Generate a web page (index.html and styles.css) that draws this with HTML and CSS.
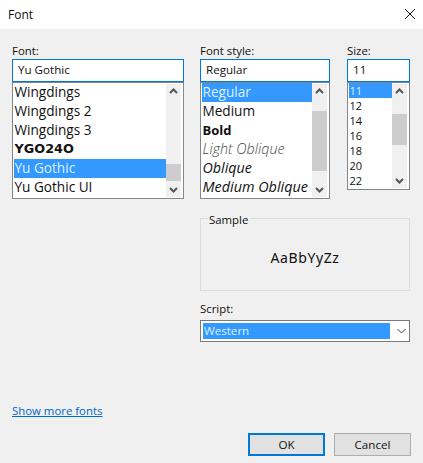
FILE: index.html
```html
<!DOCTYPE html>
<html lang="en">
<head>
<meta charset="utf-8">
<title>Font</title>
<link rel="stylesheet" href="styles.css">
</head>
<body>
<div class="dialog">
  <header class="titlebar">
    <span class="title">Font</span>
    <svg class="close" width="12" height="12" viewBox="0 0 12 12"><path d="M1 1l10 10M11 1L1 11" stroke="#111" stroke-width="1" fill="none"/></svg>
  </header>
  <main class="content">
    <div class="pickers">
      <section class="picker picker-font">
        <label class="label">Font:</label>
        <div class="input">Yu Gothic</div>
        <div class="list list-tall">
          <ul class="items">
            <li>Wingdings</li>
            <li>Wingdings 2</li>
            <li>Wingdings 3</li>
            <li class="ygo">YGO24O</li>
            <li class="sel">Yu Gothic</li>
            <li>Yu Gothic UI</li>
          </ul>
          <div class="scroll">
            <svg class="arrow" width="15" height="15" viewBox="0 0 15 15"><path d="M4 9l3.5-3.5L11 9" stroke="#555" stroke-width="2" fill="none"/></svg>
            <div class="track"><div class="thumb thumb-font"></div></div>
            <svg class="arrow" width="15" height="15" viewBox="0 0 15 15"><path d="M4 6l3.5 3.5L11 6" stroke="#555" stroke-width="2" fill="none"/></svg>
          </div>
        </div>
      </section>
      <section class="picker picker-style">
        <label class="label">Font style:</label>
        <div class="input">Regular</div>
        <div class="list list-tall">
          <ul class="items">
            <li class="sel">Regular</li>
            <li>Medium</li>
            <li class="bold">Bold</li>
            <li class="light">Light Oblique</li>
            <li class="oblique">Oblique</li>
            <li class="oblique medium">Medium Oblique</li>
          </ul>
          <div class="scroll">
            <svg class="arrow" width="15" height="15" viewBox="0 0 15 15"><path d="M4 9l3.5-3.5L11 9" stroke="#555" stroke-width="2" fill="none"/></svg>
            <div class="track"><div class="thumb thumb-style"></div></div>
            <svg class="arrow" width="15" height="15" viewBox="0 0 15 15"><path d="M4 6l3.5 3.5L11 6" stroke="#555" stroke-width="2" fill="none"/></svg>
          </div>
        </div>
      </section>
      <section class="picker picker-size">
        <label class="label">Size:</label>
        <div class="input">11</div>
        <div class="list list-short">
          <ul class="items compact">
            <li class="sel">11</li>
            <li>12</li>
            <li>14</li>
            <li>16</li>
            <li>18</li>
            <li>20</li>
            <li>22</li>
          </ul>
          <div class="scroll">
            <svg class="arrow" width="15" height="15" viewBox="0 0 15 15"><path d="M4 9l3.5-3.5L11 9" stroke="#555" stroke-width="2" fill="none"/></svg>
            <div class="track"><div class="thumb thumb-size"></div></div>
            <svg class="arrow" width="15" height="15" viewBox="0 0 15 15"><path d="M4 6l3.5 3.5L11 6" stroke="#555" stroke-width="2" fill="none"/></svg>
          </div>
        </div>
      </section>
    </div>
    <div class="lower">
      <fieldset class="sample">
        <legend class="legend">Sample</legend>
        <div class="sample-text">AaBbYyZz</div>
      </fieldset>
      <label class="label script-label">Script:</label>
      <div class="combo">
        <span class="combo-value">Western</span>
        <svg class="combo-arrow" width="9" height="6" viewBox="0 0 9 6"><path d="M.5 1l4 4 4-4" stroke="#444" stroke-width="1" fill="none"/></svg>
      </div>
    </div>
    <a class="link" href="#">Show more fonts</a>
    <div class="buttons">
      <button class="btn btn-default">OK</button>
      <button class="btn">Cancel</button>
    </div>
  </main>
</div>
</body>
</html>
```
FILE: styles.css
```css
* { box-sizing: border-box; }
html, body { margin: 0; padding: 0; }
body {
  width: 423px;
  height: 463px;
  overflow: hidden;
  font-family: "Open Sans", "Noto Sans", sans-serif;
  font-size: 11.4px;
  color: #111;
  background: #f0f0f0;
}
.dialog { display: flex; flex-direction: column; height: 463px; }
.titlebar {
  height: 29px;
  background: #fff;
  display: flex;
  align-items: center;
  justify-content: space-between;
  padding: 0 7px 1px 8px;
}
.title { font-size: 12px; }
.close { display: block; }
.content { padding: 14px 13px 7px 12px; display: flex; flex-direction: column; flex: 1; }
.pickers { display: grid; grid-template-columns: 172px 130px 63px; column-gap: 16px; align-items: start; }
.picker-size { margin-left: 1px; margin-right: -1px; }
.label { display: block; height: 16px; line-height: 16px; font-size: 11.4px; }
.input {
  height: 23px;
  border: 1px solid #0078d7;
  background: #fff;
  padding-left: 5px;
  line-height: 20px;
  font-size: 11.6px;
}
.list {
  display: flex;
  justify-content: space-between;
  background: #fff;
  border: 1px solid #82878c;
  padding: 0 2px 0 1px;
}
.list-tall { height: 117px; }
.list-short { height: 108px; }
.items { list-style: none; margin: 0; padding: 0; flex: 1; min-width: 0; font-size: 13.6px; white-space: nowrap; }
.items li { height: 19px; line-height: 18px; padding-left: .5px; }
.items.compact { font-size: 11px; }
.items.compact li { height: 15px; line-height: 15px; }
.items .sel { background: #3399ff; color: #dff0ff; }
.ygo { font-family: "DejaVu Sans", sans-serif; font-weight: 700; font-size: 12.8px; }
.bold { font-weight: 700; font-size: 13px; }
.light { font-style: italic; font-weight: 300; color: #444; font-size: 14.3px; }
.oblique { font-style: italic; font-size: 14.3px; }
.medium { font-weight: 400; font-size: 14.4px; }
.scroll { width: 15px; flex: none; margin: 1px 0; background: #f0f0f0; display: flex; flex-direction: column; }
.arrow { display: block; flex: none; }
.track { flex: 1; display: flex; flex-direction: column; }
.thumb { background: #cdcdcd; }
.thumb-font { margin-top: 65px; height: 17px; }
.thumb-style { margin-top: 12px; height: 60px; }
.thumb-size { margin-top: 15px; height: 31px; }
.lower { margin-left: 188px; width: 210px; display: flex; flex-direction: column; }
.sample {
  margin: 10px 0 0;
  padding: 0;
  height: 82px;
  border: 1px solid #dcdcdc;
  min-width: 0;
}
.legend { margin-left: 7px; padding: 3px 2px 0 1px; font-size: 11.4px; line-height: 15px; }
.sample-text { text-align: center; font-size: 14px; line-height: 20px; margin-top: 21px; letter-spacing: .6px; font-family: "Noto Sans", sans-serif; }
.script-label { margin-top: 10px; }
.combo {
  margin-top: 3px;
  height: 22px;
  border: 1px solid #7a7a7a;
  background: #fff;
  display: flex;
  align-items: center;
  padding: 0 4px 0 2px;
  gap: 7px;
}
.combo-value { width: 187px; flex: none; background: #3399ff; color: #dff0ff; height: 16px; line-height: 15px; padding-left: 1px; font-size: 11.6px; }
.combo-arrow { display: block; flex: none; }
.link { margin-top: 61px; color: #0066cc; font-size: 11.4px; line-height: 16px; align-self: flex-start; text-decoration: underline; }
.buttons { margin-top: auto; display: flex; justify-content: flex-end; gap: 9px; margin-right: -1px; }
.btn {
  width: 77px;
  height: 23px;
  background: #e1e1e1;
  border: 1px solid #adadad;
  font-family: inherit;
  font-size: 11.6px;
  color: #111;
  padding: 0;
}
.btn-default { border: 2px solid #0078d7; }
```
